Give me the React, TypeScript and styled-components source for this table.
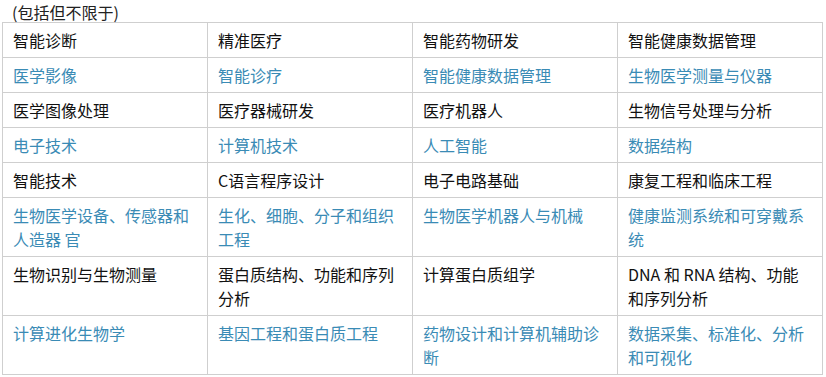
import React from 'react';
import styled, { createGlobalStyle } from 'styled-components';

const GlobalStyle = createGlobalStyle`
  body {
    margin: 0;
    background: #fff;
    font-family: "Noto Sans CJK SC", "Noto Sans", sans-serif;
  }
`;

const Page = styled.div`
  padding: 0 2px;
`;

const Caption = styled.p`
  margin: 0;
  padding: 2px 0 0 10px;
  height: 20px;
  font-size: 16px;
  line-height: 20px;
  color: #222;
`;

const Table = styled.table`
  width: 821px;
  border-collapse: collapse;
  table-layout: fixed;
`;

const Cell = styled.td<{ $accent?: boolean }>`
  border: 1px solid #cfcfcf;
  padding: 5px 10px;
  vertical-align: top;
  font-size: 16px;
  line-height: 24px;
  color: ${(p) => (p.$accent ? '#3a8bb5' : '#111')};
`;

const rows: string[][] = [
  ['智能诊断', '精准医疗', '智能药物研发', '智能健康数据管理'],
  ['医学影像', '智能诊疗', '智能健康数据管理', '生物医学测量与仪器'],
  ['医学图像处理', '医疗器械研发', '医疗机器人', '生物信号处理与分析'],
  ['电子技术', '计算机技术', '人工智能', '数据结构'],
  ['智能技术', 'C语言程序设计', '电子电路基础', '康复工程和临床工程'],
  ['生物医学设备、传感器和人造器 官', '生化、细胞、分子和组织工程', '生物医学机器人与机械', '健康监测系统和可穿戴系统'],
  ['生物识别与生物测量', '蛋白质结构、功能和序列分析', '计算蛋白质组学', 'DNA 和 RNA 结构、功能和序列分析'],
  ['计算进化生物学', '基因工程和蛋白质工程', '药物设计和计算机辅助诊断', '数据采集、标准化、分析和可视化'],
];

const App = () => {
  return (
    <Page>
      <GlobalStyle />
      <Caption>(包括但不限于)</Caption>
      <Table>
        <tbody>
          {rows.map((row, i) => (
            <tr key={i}>
              {row.map((text, j) => (
                <Cell key={j} $accent={i % 2 === 1}>{text}</Cell>
              ))}
            </tr>
          ))}
        </tbody>
      </Table>
    </Page>
  );
};

export default App;
